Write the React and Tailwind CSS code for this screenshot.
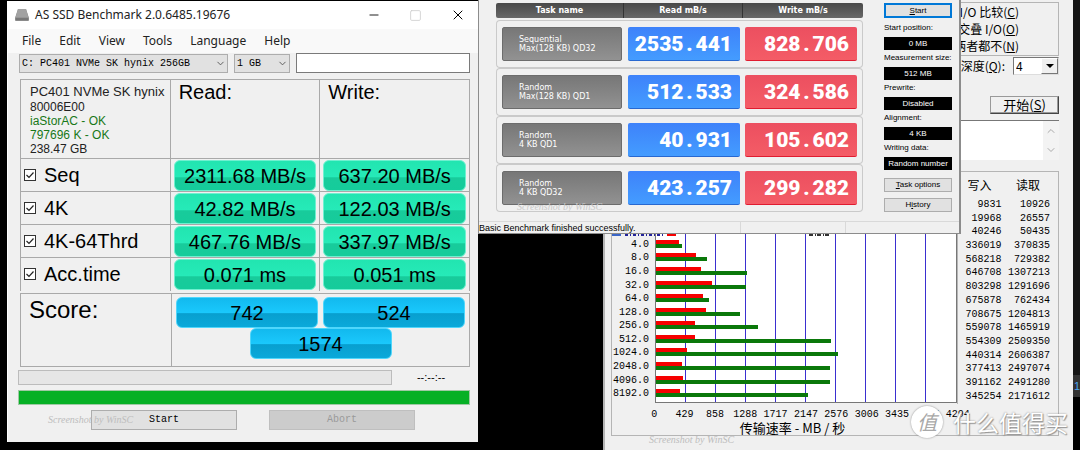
import { ChevronDown, ChevronUp, Minus, Square, X } from 'lucide-react';

const ssdTests = [
  { name: 'Seq', read: '2311.68 MB/s', write: '637.20 MB/s' },
  { name: '4K', read: '42.82 MB/s', write: '122.03 MB/s' },
  { name: '4K-64Thrd', read: '467.76 MB/s', write: '337.97 MB/s' },
  { name: 'Acc.time', read: '0.071 ms', write: '0.051 ms' },
];

const txTasks = [
  { name: 'Sequential', detail: 'Max(128 KB) QD32', read: '2535.441', write: '828.706' },
  { name: 'Random', detail: 'Max(128 KB) QD1', read: '512.533', write: '324.586' },
  { name: 'Random', detail: '4 KB QD1', read: '40.931', write: '105.602' },
  { name: 'Random', detail: '4 KB QD32', read: '423.257', write: '299.282' },
];

const txSettings = [
  { id: 'start-position', label: 'Start position:', value: '0 MB' },
  { id: 'measurement-size', label: 'Measurement size:', value: '512 MB' },
  { id: 'prewrite', label: 'Prewrite:', value: 'Disabled' },
  { id: 'alignment', label: 'Alignment:', value: '4 KB' },
  { id: 'writing-data', label: 'Writing data:', value: 'Random number' },
];

const transfers = [
  { size: '0.5', write: 9831, read: 10926 },
  { size: '1.0', write: 19968, read: 26557 },
  { size: '2.0', write: 40246, read: 50435 },
  { size: '4.0', write: 336019, read: 370835 },
  { size: '8.0', write: 568218, read: 729382 },
  { size: '16.0', write: 646708, read: 1307213 },
  { size: '32.0', write: 803298, read: 1291696 },
  { size: '64.0', write: 675878, read: 762434 },
  { size: '128.0', write: 708675, read: 1204813 },
  { size: '256.0', write: 559078, read: 1465919 },
  { size: '512.0', write: 554309, read: 2509350 },
  { size: '1024.0', write: 440314, read: 2606387 },
  { size: '2048.0', write: 377413, read: 2497074 },
  { size: '4096.0', write: 391162, read: 2491280 },
  { size: '8192.0', write: 345254, read: 2171612 },
];

// the three smallest sizes are behind the TxBENCH window
const charted = transfers.slice(3);

const axis = [0, 429, 858, 1288, 1717, 2147, 2576, 3006, 3435, 3865, 4294];
const axisMax = 4294967;

const percent = (value) => `${(value / axisMax) * 100}%`;

function Signature({ className }) {
  return (
    <span
      className={`absolute whitespace-nowrap font-['Liberation_Serif',serif] text-[10px] leading-3 italic pointer-events-none ${className}`}
    >
      Screenshot by WinSC
    </span>
  );
}

function Pill({ children }) {
  return (
    <div className="mx-[3px] h-[31px] rounded-md border border-[#6ff0d0] bg-[linear-gradient(#22e5b0,#26eab8_54%,#18cb9b_58%,#15cc9b)] text-center text-xl leading-[31px]">
      {children}
    </div>
  );
}

function ScorePill({ children }) {
  return (
    <div className="h-[31px] w-[142px] rounded-md border border-[#4fd6fb] bg-[linear-gradient(#12b9ee,#1ac8fc_50%,#089fcf_54%,#0aa9da)] text-center text-xl leading-[31px]">
      {children}
    </div>
  );
}

function AsSsdWindow() {
  return (
    <section className="absolute top-px left-[7px] w-[471px] border-l border-white bg-[#f0f0f0] pb-3 font-['Liberation_Sans',sans-serif] text-black">
      <header className="flex h-7 items-center bg-white pr-3 pl-[7px]">
        <svg viewBox="0 0 14 12" className="mr-1.5 h-3 w-3.5">
          <path d="M3 0h8l3 9v2q0 1-1 1H1q-1 0-1-1V9z" fill="#8b8b8b" />
          <path d="M3 0h8l2.500 8.500h-13z" fill="#a2a2a2" />
          <path d="M1 10h12" stroke="#666" strokeWidth="1" />
        </svg>
        <h1 className="font-['Noto_Sans',sans-serif] text-xs text-[#222]">AS SSD Benchmark 2.0.6485.19676</h1>
        <div className="ml-auto flex items-center gap-7">
          <button aria-label="Minimize"><Minus size={14} strokeWidth={1.5} /></button>
          <button aria-label="Maximize" className="text-[#ccc]"><Square size={13} strokeWidth={1.5} /></button>
          <button aria-label="Close"><X size={16} strokeWidth={1.5} /></button>
        </div>
      </header>

      <nav className="flex h-6 items-center gap-[18px] bg-[#f9f9f9] pl-3.5 font-['Noto_Sans',sans-serif] text-xs text-[#222]">
        <button>File</button>
        <button>Edit</button>
        <button>View</button>
        <button>Tools</button>
        <button>Language</button>
        <button>Help</button>
      </nav>

      <div className="flex gap-1.5 pr-2 pl-[11px] font-['Liberation_Mono',monospace] text-[10px]">
        <div className="grid w-[209px] items-center">
          <select aria-label="Drive" className="col-start-1 row-start-1 h-[19px] appearance-none border border-[#adadad] bg-[#e1e1e1] pl-0.5">
            <option>C: PC401 NVMe SK hynix 256GB</option>
          </select>
          <ChevronDown size={11} className="pointer-events-none col-start-1 row-start-1 mr-0.5 justify-self-end text-[#555]" />
        </div>
        <div className="grid w-14 items-center">
          <select aria-label="Test size" className="col-start-1 row-start-1 h-[19px] appearance-none border border-[#adadad] bg-[#e1e1e1] pl-0.5">
            <option>1 GB</option>
          </select>
          <ChevronDown size={11} className="pointer-events-none col-start-1 row-start-1 mr-0.5 justify-self-end text-[#555]" />
        </div>
        <input type="text" aria-label="Comment" className="h-5 min-w-0 flex-1 border border-[#7a7a7a] bg-white" />
      </div>

      <div className="mt-1.5 pr-2 pl-3">
        <table className="w-full table-fixed border-collapse border-r border-[#a9a9a9] text-left [&_td]:border-t [&_td]:border-l [&_td]:border-[#a9a9a9] [&_th]:border-t [&_th]:border-l [&_th]:border-[#a9a9a9]">
          <thead>
            <tr className="h-[79px] align-top">
              <td className="pt-1 pl-[9px] text-xs leading-[14px] whitespace-nowrap text-[#222]">
                <p className="text-[13px] leading-4">PC401 NVMe SK hynix</p>
                <p>80006E00</p>
                <p className="text-[#187818]">iaStorAC - OK</p>
                <p className="text-[#187818]">797696 K - OK</p>
                <p>238.47 GB</p>
              </td>
              <th className="pl-2 text-xl leading-6 font-normal">Read:</th>
              <th className="pl-2 text-xl leading-6 font-normal">Write:</th>
            </tr>
          </thead>
          <tbody>
            {ssdTests.map((test) => (
              <tr key={test.name} className="h-[33px]">
                <td className="p-0">
                  <label className="flex items-center gap-2 pl-[3px] text-xl leading-8">
                    <span className="grid">
                      <input type="checkbox" defaultChecked className="peer col-start-1 row-start-1 size-3 appearance-none border border-[#333] bg-white" />
                      <svg viewBox="0 0 12 12" className="pointer-events-none invisible col-start-1 row-start-1 size-3 peer-checked:visible">
                        <path d="M2.500 6l2.500 2.500 4.500-5" fill="none" stroke="#222" strokeWidth="1.200" />
                      </svg>
                    </span>
                    {test.name}
                  </label>
                </td>
                <td className="p-0"><Pill>{test.read}</Pill></td>
                <td className="p-0"><Pill>{test.write}</Pill></td>
              </tr>
            ))}
          </tbody>
        </table>

        <div className="mt-0.5 flex h-[74px] border border-[#a9a9a9]">
          <h2 className="w-[151px] border-r border-[#a9a9a9] pl-2 text-2xl leading-8">Score:</h2>
          <div className="flex flex-1 flex-wrap content-start justify-center gap-x-[5px] pt-[3px]">
            <ScorePill>742</ScorePill>
            <ScorePill>524</ScorePill>
            <ScorePill>1574</ScorePill>
          </div>
        </div>
      </div>

      <div className="mt-[3px] flex items-center pr-2 pl-2.5">
        <div className="h-[15px] w-[374px] border border-[#bcbcbc] bg-[#e6e6e6]" />
        <span className="flex-1 text-center text-[11px] leading-[15px]">--:--:--</span>
      </div>
      <div className="mt-[5px] mr-2 ml-2.5 h-[15px] border border-[#9fc9a4] bg-[#06b025]" />

      <div className="mt-[5px] flex gap-8 pl-[83px] font-['Liberation_Mono',monospace] text-[10px]">
        <button className="h-5 w-[146px] border border-[#adadad] bg-[#e1e1e1]">Start</button>
        <button disabled className="h-5 w-[146px] border border-[#bfbfbf] bg-[#ccc] text-[#9a9a9a]">Abort</button>
      </div>
      <Signature className="bottom-4 left-10 text-[#bdbdbd]" />
    </section>
  );
}

function TxNumber({ value }) {
  const [whole, fraction] = value.split('.');
  return (
    <span className="flex justify-end pr-2 font-['Roboto',sans-serif] text-[21px] leading-[34px] font-black text-white">
      {whole}
      <span className="w-3 text-center">.</span>
      {fraction}
    </span>
  );
}

function TxBenchWindow() {
  return (
    <section className="absolute top-0 left-[478px] w-[483px] border-r-2 border-b border-l border-[#8c8c8c] bg-[#f0f0f0] font-['Liberation_Sans',sans-serif] text-[9px] text-black">
      <div className="flex h-[221px] gap-[21px] pt-[3px] pl-[17px]">
        <table className="h-[209px] w-[367px] table-fixed border-separate border-spacing-0">
          <thead>
            <tr className="font-['DejaVu_Sans',sans-serif] text-[8px] leading-[15px] text-white">
              <th className="w-32 p-0 pb-0.5"><div className="rounded-l-xs border-r border-[#333] bg-linear-to-b from-[#494949] to-[#686868]">Task name</div></th>
              <th className="w-[119px] p-0 pb-0.5"><div className="border-r border-[#333] bg-linear-to-b from-[#494949] to-[#686868]">Read mB/s</div></th>
              <th className="p-0 pb-0.5"><div className="rounded-r-xs bg-linear-to-b from-[#494949] to-[#686868]">Write mB/s</div></th>
            </tr>
          </thead>
          <tbody>
            {txTasks.map((task) => (
              <tr key={task.detail}>
                <td className="rounded-l-sm border-y border-l border-[#cacaca] py-1.5 pr-0.5 pl-[5px]">
                  <div className="flex h-[34px] flex-col justify-center rounded-xs border border-[#6c6c6c] bg-linear-to-b from-[#777] to-[#929292] pl-4 font-['DejaVu_Sans',sans-serif] text-[8px] leading-[9px] whitespace-nowrap text-white">
                    <span>{task.name}</span>
                    <span>{task.detail}</span>
                  </div>
                </td>
                <td className="border-y border-[#cacaca] py-1.5 pr-[3px] pl-1">
                  <div className="h-[34px] rounded-xs border-b border-[#2868d0] bg-linear-to-b from-[#3e82fa] to-[#449cff]"><TxNumber value={task.read} /></div>
                </td>
                <td className="rounded-r-sm border-y border-r border-[#cacaca] py-1.5 pr-[5px] pl-0.5">
                  <div className="h-[34px] rounded-xs border-b border-[#e01c30] bg-linear-to-b from-[#ec4f60] to-[#f45c66]"><TxNumber value={task.write} /></div>
                </td>
              </tr>
            ))}
          </tbody>
        </table>

        <div className="flex w-[68px] flex-col">
          <button className="h-[15px] border-2 border-[#0078d7] bg-[#e1e1e1] text-[8px] leading-[11px]"><u>S</u>tart</button>
          <div className="mt-0.5 flex flex-col">
            {txSettings.map((setting) => (
              <div key={setting.id} className="flex h-[30px] flex-col justify-between pt-0.5">
                <label htmlFor={setting.id} className="text-[8px] leading-3 whitespace-nowrap">{setting.label}</label>
                <input id={setting.id} readOnly value={setting.value} className="h-[13px] w-full bg-black text-center text-[8px] text-white" />
              </div>
            ))}
          </div>
          <button className="mt-2 h-3.5 border border-[#adadad] bg-[#e1e1e1] text-[8px] leading-3"><u>T</u>ask options</button>
          <button className="mt-1.5 h-3.5 border border-[#adadad] bg-[#e1e1e1] text-[8px] leading-3">H<u>i</u>story</button>
        </div>
      </div>

      <footer className="flex h-3 border-t border-[#d9d9d9] leading-3">
        <span className="w-[262px] border-r border-[#d9d9d9]">Basic Benchmark finished successfully.</span>
        <span className="w-[105px] border-r border-[#d9d9d9]" />
      </footer>
      <Signature className="bottom-5 left-[38px] text-[#c9c9c9]" />
    </section>
  );
}

function AttoWindow() {
  return (
    <section className="absolute top-0 right-[7px] bottom-0 left-[603px] flex flex-col border-l-2 border-[#b5b5b5] bg-[#f0f0f0] pr-[14px] pl-1.5 font-['Noto_Sans_CJK_SC',sans-serif] text-xs text-black">
      <div className="mt-0.5 flex h-[54px] flex-col items-end justify-around border border-[#b5b5b5] pr-[39px] leading-4">
        <span>I/O 比较(<u>C</u>)</span>
        <span>交叠 I/O(<u>O</u>)</span>
        <span>两者都不(<u>N</u>)</span>
      </div>
      <div className="flex h-5 items-center justify-end gap-2">
        <label htmlFor="queue-depth">队列深度(<u>Q</u>):</label>
        <div className="grid w-[46px] items-center">
          <select id="queue-depth" defaultValue="4" className="col-start-1 row-start-1 h-[18px] appearance-none border border-r-[#ddd] border-b-[#ddd] border-t-[#777] border-l-[#777] bg-white pl-0.5 leading-4">
            <option>4</option>
          </select>
          <span className="pointer-events-none col-start-1 row-start-1 mr-px flex h-4 w-[17px] items-center justify-center justify-self-end border border-t-white border-l-white border-r-[#777] border-b-[#777] bg-[#f0f0f0]">
            <svg viewBox="0 0 8 4" className="h-1 w-2"><path d="M0 0h8L4 4z" /></svg>
          </span>
        </div>
      </div>
      <button className="mt-5 h-[18px] w-[69px] self-end border border-t-[#999] border-l-[#999] border-r-[#444] border-b-[#444] bg-[#f0f0f0] text-[13px] leading-4 shadow-[inset_-1px_-1px_#999]">
        开始(<u>S</u>)
      </button>
      <div className="mt-1.5 flex h-10 border-t border-[#777] bg-white">
        <textarea aria-label="说明" className="min-w-0 flex-1 resize-none" />
        <div className="flex w-4 flex-col items-center justify-between bg-[#f3f3f3] py-1 text-[#aaa]">
          <ChevronUp size={12} />
          <ChevronDown size={12} />
        </div>
      </div>

      <div className="mt-[11px] flex h-[265px] border border-[#b5b5b5]">
        <div className="flex flex-1 flex-col">
          <div className="flex h-[232px]">
            <ul className="flex w-[43px] flex-col pt-[66px] pb-0.5 pr-1.5 text-right font-['Liberation_Mono',monospace] text-[10px]">
              {charted.map((item) => (
                <li key={item.size} className="flex flex-1 items-center justify-end leading-3">{item.size}</li>
              ))}
            </ul>
            <div className="grid flex-1 border-r border-b border-l border-[#777] bg-white">
              <div className="col-start-1 row-start-1 grid grid-cols-10">
                {axis.slice(1).map((tick) => (
                  <span key={tick} className="border-r border-[#3a2fd0] last:border-r-0" />
                ))}
              </div>
              <div className="col-start-1 row-start-1 flex flex-col pt-[65px] pb-0.5">
                {charted.map((item) => (
                  <div key={item.size} className="flex flex-1 flex-col justify-center">
                    <div className="h-1 bg-[#f60000]" style={{ width: percent(item.write) }} />
                    <div className="h-1 bg-[#0a780a]" style={{ width: percent(item.read) }} />
                  </div>
                ))}
              </div>
            </div>
          </div>
          <div className="mt-1.5 -mr-4 ml-[27px] flex font-['Liberation_Mono',monospace] text-[10px] leading-3">
            {axis.map((tick) => (
              <span key={tick} className="flex-1 text-center">{tick}</span>
            ))}
          </div>
          <p className="pl-4 text-center text-[13px] leading-[14px]">传输速率 - MB / 秒</p>
        </div>

        <table className="h-[232px] w-[101px] table-fixed border-l border-[#b5b5b5] text-right font-['Liberation_Mono',monospace] text-[10px] leading-3">
          <thead>
            <tr className="h-[26px] font-['Noto_Sans_CJK_SC',sans-serif] text-xs">
              <th className="w-11 p-0 pr-2.5 font-normal">写入</th>
              <th className="p-0 pr-[18px] font-normal">读取</th>
            </tr>
          </thead>
          <tbody>
            {transfers.map((item) => (
              <tr key={item.size}>
                <td className="p-0">{item.write}</td>
                <td className="p-0 pr-2">{item.read}</td>
              </tr>
            ))}
          </tbody>
        </table>
      </div>

      {/* lower edge of the legend, just below the covering window */}
      <svg viewBox="0 0 226 2" className="absolute top-[234px] left-1.5 h-0.5 w-[226px]">
        <path d="M1 1h9" stroke="#3a66c8" strokeWidth="2" />
        <path d="M14 1h38" stroke="#23239a" strokeWidth="2" strokeDasharray="3 2 1 2" />
        <path d="M56 1h9" stroke="#f60000" strokeWidth="2" />
        <path d="M198 1h22" stroke="#333" strokeWidth="2" strokeDasharray="4 2 1 1" />
      </svg>
      <Signature className="bottom-1 left-11 text-[#bdbdbd]" />
    </section>
  );
}

function SiteMark() {
  return (
    <div className="absolute right-3 bottom-3 flex items-center gap-2.5 font-['Noto_Sans_CJK_SC',sans-serif] text-white">
      <span className="flex size-8 items-center justify-center rounded-full bg-white text-xl leading-8 text-[#a8a8a8] italic shadow-[0_0_2px_#888]">值</span>
      <span className="text-[23px] leading-8 [text-shadow:0_0_2px_#888,1px_1px_1px_#999]">什么值得买</span>
    </div>
  );
}

function App() {
  return (
    <main className="relative h-screen min-h-[450px] overflow-hidden bg-black">
      <aside className="absolute top-0 right-0 flex w-[7px] flex-col bg-[#151515] pt-[375px]">
        <span className="h-[22px] bg-[#333] text-right font-['Liberation_Sans',sans-serif] text-[11px] leading-[22px] text-[#4aa3f0]">1</span>
      </aside>
      <AttoWindow />
      <AsSsdWindow />
      <TxBenchWindow />
      <SiteMark />
    </main>
  );
}

export default App;
